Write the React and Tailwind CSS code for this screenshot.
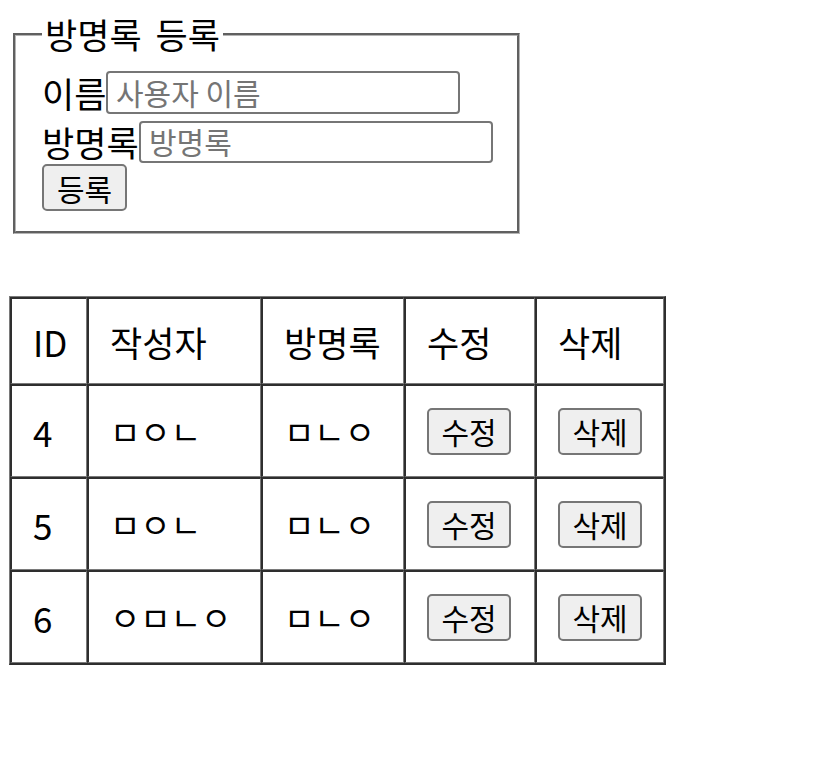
import { useState } from "react";

const initialRows = [
    { id: 4, name: "ㅁㅇㄴ", content: "ㅁㄴㅇ" },
    { id: 5, name: "ㅁㅇㄴ", content: "ㅁㄴㅇ" },
    { id: 6, name: "ㅇㅁㄴㅇ", content: "ㅁㄴㅇ" },
];

const cell =
    "border-t-2 border-l-2 border-r border-b border-t-[#2e2e2e] border-l-[#2e2e2e] border-r-[#7a7a7a] border-b-[#7a7a7a] px-[21px] text-left align-middle font-normal";

const btn =
    "flex h-[47px] items-center justify-center rounded-[5px] border-2 border-[#767676] bg-[#efefef] text-[30px] leading-none text-black";

export default function App() {
    const [rows] = useState(initialRows);
    const [name, setName] = useState("");
    const [content, setContent] = useState("");

    return (
        <div className="min-h-screen bg-white pt-[13px] font-['Noto_Sans_CJK_KR',sans-serif] text-black">
            {/* 등록 폼 */}
            <fieldset className="ml-[13px] w-[507px] border-[3px] border-[#b4b4b4] pb-[20px] pl-[26px] [border-style:groove]">
                <legend className="px-[3px] text-[35px] leading-[42px] [word-spacing:6px]">방명록 등록</legend>
                <form onSubmit={(e) => e.preventDefault()}>
                    <div className="mt-[16px] flex h-[43px] items-center">
                        <label className="w-[64px] shrink-0 whitespace-nowrap text-[35px] leading-none">이름</label>
                        <input
                            type="text"
                            value={name}
                            onChange={(e) => setName(e.target.value)}
                            placeholder="사용자 이름"
                            className="h-[43px] w-[354px] rounded-[4px] border-2 border-[#767676] px-[8px] text-[30px] outline-none placeholder:text-[#757575]"
                        />
                    </div>
                    <div className="mt-[6px] flex h-[43px] items-center">
                        <label className="w-[97px] shrink-0 whitespace-nowrap text-[35px] leading-none">방명록</label>
                        <input
                            type="text"
                            value={content}
                            onChange={(e) => setContent(e.target.value)}
                            placeholder="방명록"
                            className="h-[42px] w-[354px] rounded-[4px] border-2 border-[#767676] px-[8px] text-[30px] outline-none placeholder:text-[#757575]"
                        />
                    </div>
                    <button type="submit" className={`${btn} mt-[1px] w-[85px]`}>
                        등록
                    </button>
                </form>
            </fieldset>

            {/* 방명록 목록 */}
            <table className="ml-[9px] mt-[62px] w-[657px] table-fixed border-separate border-spacing-0 border-t border-l border-r-2 border-b-2 border-t-[#7a7a7a] border-l-[#7a7a7a] border-r-[#2e2e2e] border-b-[#2e2e2e] text-[35px] leading-none">
                <thead>
                    <tr>
                        <th className={`${cell} h-[87px] w-[77px]`}>ID</th>
                        <th className={`${cell} h-[87px] w-[174px]`}>작성자</th>
                        <th className={`${cell} h-[87px] w-[143px]`}>방명록</th>
                        <th className={`${cell} h-[87px] w-[131px]`}>수정</th>
                        <th className={`${cell} h-[87px] w-[129px]`}>삭제</th>
                    </tr>
                </thead>
                <tbody>
                    {rows.map((row) => (
                        <tr key={row.id}>
                            <td className={`${cell} h-[93px]`}>{row.id}</td>
                            <td className={`${cell} h-[93px] text-[33px]`}>{row.name}</td>
                            <td className={`${cell} h-[93px] text-[33px]`}>{row.content}</td>
                            <td className={`${cell} h-[93px]`}>
                                <button className={`${btn} w-[84px]`}>수정</button>
                            </td>
                            <td className={`${cell} h-[93px]`}>
                                <button className={`${btn} w-[84px]`}>삭제</button>
                            </td>
                        </tr>
                    ))}
                </tbody>
            </table>
        </div>
    );
}
